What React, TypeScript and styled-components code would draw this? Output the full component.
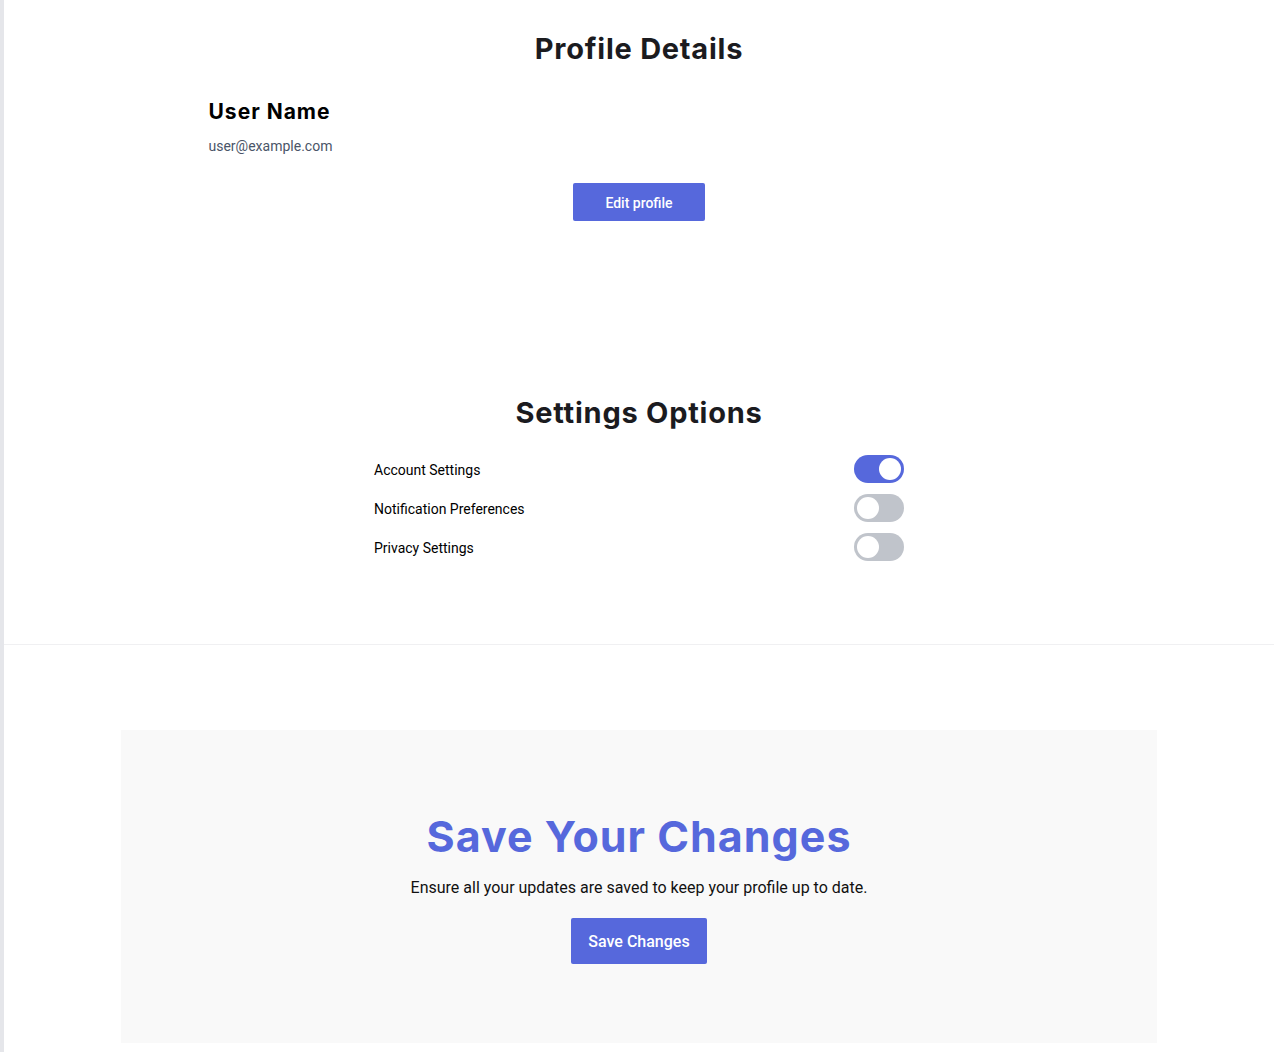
import React, { useState } from "react";
import styled, { createGlobalStyle } from "styled-components";

const GlobalStyle = createGlobalStyle`
  html, body { margin: 0; padding: 0; background: #ffffff; }
  body { font-family: Roboto, "Liberation Sans", Arial, sans-serif; color: #000; }
  * { box-sizing: border-box; }
`;

const Page = styled.div`
  border-left: 4px solid #e5e6ea;
  min-height: 1052px;
  background: #fff;
`;

const ProfileSection = styled.section`
  padding-top: 32px;
  display: flex;
  flex-direction: column;
  align-items: center;
`;

const SectionTitle = styled.h2`
  margin: 0;
  font-family: Inter, "Noto Sans", sans-serif;
  font-weight: 700;
  font-size: 29px;
  line-height: 34px;
  color: #1b1b1f;
  text-align: center;
  letter-spacing: 0.75px;
`;

const UserBlock = styled.div`
  width: 861px;
  margin-top: 33px;
  display: flex;
  flex-direction: column;
`;

const UserName = styled.h3`
  margin: 0;
  font-family: Inter, "Noto Sans", sans-serif;
  font-weight: 700;
  font-size: 21px;
  line-height: 26px;
  color: #000;
  letter-spacing: 1px;
`;

const Email = styled.p`
  margin: 11px 0 0;
  font-size: 14px;
  line-height: 20px;
  color: #4a5568;
`;

const PrimaryButton = styled.button<{ $large?: boolean }>`
  border: none;
  border-radius: 2px;
  background: #5668dc;
  color: #fff;
  font-family: Roboto, "Liberation Sans", sans-serif;
  font-weight: 500;
  cursor: pointer;
  font-size: ${(p) => (p.$large ? "16px" : "14px")};
  height: ${(p) => (p.$large ? "46px" : "38px")};
  padding: ${(p) => (p.$large ? "2px 17px 0" : "2px 32px 0")};
`;

const EditWrap = styled.div`
  margin-top: 27px;
`;

const SettingsSection = styled.section`
  margin-top: 175px;
  display: flex;
  flex-direction: column;
  align-items: center;
  padding-bottom: 83px;
`;

const SettingsList = styled.ul`
  list-style: none;
  margin: 25px 0 0;
  padding: 0;
  width: 530px;
  display: flex;
  flex-direction: column;
  gap: 11px;
`;

const SettingRow = styled.li`
  display: flex;
  align-items: center;
  justify-content: space-between;
  height: 28px;
  font-size: 14px;
  color: #000;
`;

const SettingLabel = styled.span`
  padding-top: 2px;
`;

const Track = styled.button<{ $on: boolean }>`
  width: 50px;
  height: 28px;
  border: none;
  padding: 3px;
  border-radius: 14px;
  background: ${(p) => (p.$on ? "#5668dc" : "#c0c4cb")};
  display: flex;
  justify-content: ${(p) => (p.$on ? "flex-end" : "flex-start")};
  align-items: center;
  cursor: pointer;
`;

const Knob = styled.span`
  width: 22px;
  height: 22px;
  border-radius: 50%;
  background: #fff;
`;

const CtaSection = styled.section`
  border-top: 1px solid #f0f0f2;
  box-shadow: 1px 0 0 #f0f0f2;
  padding: 85px 0 20px;
  display: flex;
  justify-content: center;
`;

const CtaBox = styled.div`
  width: 1036px;
  height: 313px;
  background: #f9f9f9;
  display: flex;
  flex-direction: column;
  align-items: center;
  justify-content: center;
`;

const CtaTitle = styled.h2`
  margin: 0;
  font-family: Inter, "Noto Sans", sans-serif;
  font-weight: 700;
  font-size: 43px;
  line-height: 52px;
  color: #5668dc;
  letter-spacing: 1px;
`;

const CtaText = styled.p`
  margin: 14px 0 18px;
  font-size: 16px;
  line-height: 24px;
  color: #111;
`;

function Toggle({ initial }: { initial: boolean }) {
  const [on, setOn] = useState(initial);
  return (
    <Track $on={on} onClick={() => setOn(!on)} aria-pressed={on}>
      <Knob />
    </Track>
  );
}

export default function App() {
  const settings = [
    { label: "Account Settings", on: true },
    { label: "Notification Preferences", on: false },
    { label: "Privacy Settings", on: false },
  ];
  return (
    <>
      <GlobalStyle />
      <Page>
        <ProfileSection>
          <SectionTitle>Profile Details</SectionTitle>
          <UserBlock>
            <UserName>User Name</UserName>
            <Email>user@example.com</Email>
          </UserBlock>
          <EditWrap>
            <PrimaryButton>Edit profile</PrimaryButton>
          </EditWrap>
        </ProfileSection>
        <SettingsSection>
          <SectionTitle>Settings Options</SectionTitle>
          <SettingsList>
            {settings.map((s) => (
              <SettingRow key={s.label}>
                <SettingLabel>{s.label}</SettingLabel>
                <Toggle initial={s.on} />
              </SettingRow>
            ))}
          </SettingsList>
        </SettingsSection>
        <CtaSection>
          <CtaBox>
            <CtaTitle>Save Your Changes</CtaTitle>
            <CtaText>Ensure all your updates are saved to keep your profile up to date.</CtaText>
            <PrimaryButton $large>Save Changes</PrimaryButton>
          </CtaBox>
        </CtaSection>
      </Page>
    </>
  );
}
